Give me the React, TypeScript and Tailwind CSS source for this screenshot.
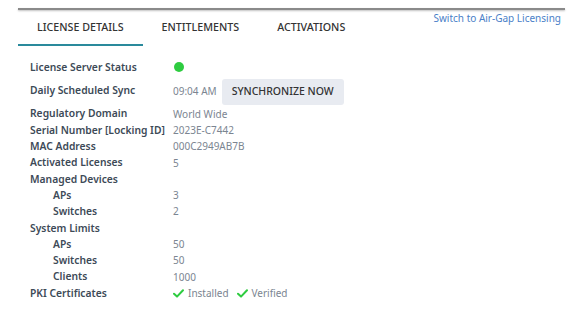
import React from 'react'

const rows: { label: string; value?: React.ReactNode; indent?: boolean }[] = [
  { label: 'Regulatory Domain', value: 'World Wide' },
  { label: 'Serial Number [Locking ID]', value: '2023E-C7442' },
  { label: 'MAC Address', value: '000C2949AB7B' },
  { label: 'Activated Licenses', value: '5' },
  { label: 'Managed Devices' },
  { label: 'APs', value: '3', indent: true },
  { label: 'Switches', value: '2', indent: true },
  { label: 'System Limits' },
  { label: 'APs', value: '50', indent: true },
  { label: 'Switches', value: '50', indent: true },
  { label: 'Clients', value: '1000', indent: true },
]

function Check() {
  return (
    <svg width="11" height="9" viewBox="0 0 11 9" className="mr-[4px]">
      <path d="M1 4.8 L4 7.6 L10 1.2" fill="none" stroke="#2ecc40" strokeWidth="2" strokeLinecap="round" strokeLinejoin="round" />
    </svg>
  )
}

function Row({ label, value, indent }: { label: string; value?: React.ReactNode; indent?: boolean }) {
  return (
    <div className="flex items-center h-[16.3px]">
      <div className={`w-[143px] shrink-0 whitespace-nowrap font-semibold text-[#3d4a57] text-[10.3px] ${indent ? 'pl-[23px]' : ''}`}>{label}</div>
      <div className="text-[#7b8591] text-[10px] flex items-center whitespace-nowrap">{value}</div>
    </div>
  )
}

export default function App() {
  return (
    <div className="w-[569px] h-[326px] bg-white pt-[8px] pl-[18px] pr-[4px]" style={{ fontFamily: '"Noto Sans", "Open Sans", sans-serif' }}>
      <div className="h-[2px] bg-[#8a8a8a] shadow-[0_1px_2px_rgba(0,0,0,0.25)]" />
      <div className="flex justify-between">
        <div className="flex text-[#333] font-medium text-[10.7px]">
          <div className="px-[19px] pt-[9px] h-[36px] border-b-2 border-[#2a8a9c] whitespace-nowrap">LICENSE DETAILS</div>
          <div className="px-[19px] pt-[9px] h-[36px] whitespace-nowrap">ENTITLEMENTS</div>
          <div className="px-[19px] pt-[9px] h-[36px] whitespace-nowrap">ACTIVATIONS</div>
        </div>
        <div className="text-[#4a7fc8] text-[10px] pt-[1px] pr-[4px] whitespace-nowrap">Switch to Air-Gap Licensing</div>
      </div>
      <div className="pl-[12px] pt-[14px]">
        <div className="flex items-center h-[16px]">
          <div className="w-[143px] font-semibold text-[#3d4a57] text-[10.3px]">License Server Status</div>
          <div className="w-[10px] h-[10px] rounded-full bg-[#2ecc40] ml-[1px] mb-[3px]" />
        </div>
        <div className="flex items-center h-[28px] mt-[1px]">
          <div className="w-[143px] font-semibold text-[#3d4a57] text-[10.3px]">Daily Scheduled Sync</div>
          <div className="text-[#7b8591] text-[10px]">09:04 AM</div>
          <div className="ml-[5px] h-[26px] px-[10px] flex items-center bg-[#e8ebf1] rounded-[3px] text-[#333] font-medium text-[10.5px] mt-[2px]">SYNCHRONIZE NOW</div>
        </div>
        <div className="mt-[1px]">
          {rows.map((r, i) => (
            <Row key={i} {...r} />
          ))}
          <Row
            label="PKI Certificates"
            value={
              <>
                <Check />
                <span>Installed</span>
                <span className="ml-[8px]" />
                <Check />
                <span>Verified</span>
              </>
            }
          />
        </div>
      </div>
    </div>
  )
}
